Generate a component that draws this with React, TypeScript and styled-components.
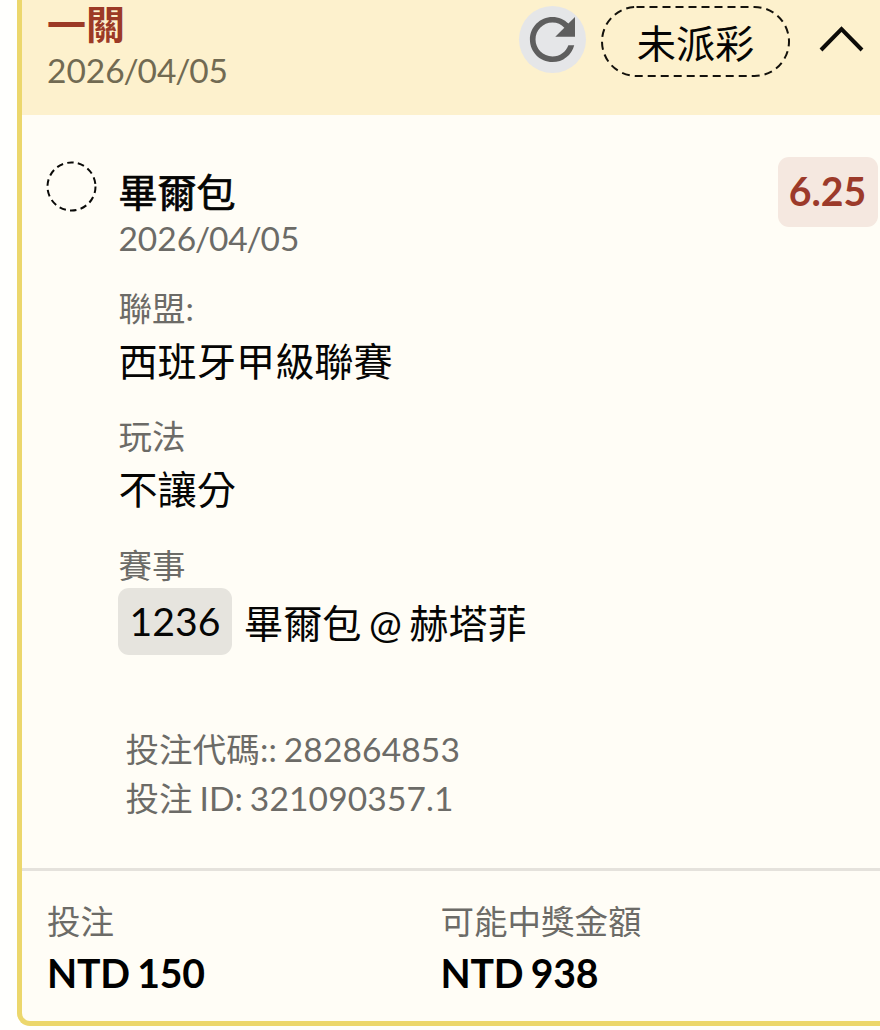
import React from "react";
import styled, { createGlobalStyle } from "styled-components";

const GlobalStyle = createGlobalStyle`
  * { box-sizing: border-box; }
  body {
    margin: 0;
    background: #fffffd;
    color: #050504;
    font-family: Lato, "Noto Sans CJK TC", sans-serif;
    font-size: 39.2px;
    word-spacing: -2px;
    overflow: hidden;
  }
`;

const Page = styled.main`
  height: 1030px;
  padding-left: 17px;
  overflow: hidden;
`;

const Card = styled.article`
  height: 1026px;
  display: flex;
  flex-direction: column;
  background: #fffdf6;
  border: solid #ecd76c;
  border-width: 0 0 5px 5px;
  border-bottom-left-radius: 13px;
  overflow: hidden;
`;

const Header = styled.header`
  height: 115px;
  flex: none;
  display: flex;
  justify-content: space-between;
  padding: 0 16px 0 25px;
  background: #fdf1cd;
`;

const Title = styled.h1`
  margin: 0;
  height: 50px;
  font-size: 39px;
  line-height: 49px;
  font-weight: 700;
  color: #9c3a26;
`;

const Muted = styled.div<{ $tone?: string }>`
  font-size: 33.5px;
  line-height: 40px;
  white-space: nowrap;
  color: ${({ $tone }) => $tone ?? "#6c6b67"};
`;

const Slash = styled.span`
  margin: 0 -1.2px;
`;

const Actions = styled.div`
  display: flex;
  align-items: flex-start;
  padding-top: 6px;
`;

const RefreshButton = styled.button`
  width: 67px;
  height: 67px;
  margin-right: 15px;
  padding: 0;
  border: 0;
  border-radius: 50%;
  background: #e5e6e8;
  svg { display: block; }
`;

const Status = styled.span`
  position: relative;
  width: 189px;
  height: 71px;
  margin-right: 29px;
  text-align: center;
  line-height: 73px;
  svg { position: absolute; inset: 0; }
`;

const CollapseButton = styled.button`
  width: 45px;
  height: 28px;
  margin-top: 19px;
  padding: 0;
  border: 0;
  background: none;
  svg { display: block; }
`;

const Body = styled.section`
  height: 753px;
  flex: none;
  display: flex;
  align-items: flex-start;
  padding: 42px 2px 0 24px;
`;

const Marker = styled.svg`
  flex: none;
  margin: 4px 21.4px 0 0;
`;

const Details = styled.div`
  flex: 1;
  padding-top: 9px;
`;

const Team = styled.h2`
  margin: 0;
  font-size: 39.1px;
  line-height: 52px;
  font-weight: 400;
  -webkit-text-stroke: 0.7px currentColor;
`;

const Field = styled.div`
  margin-top: 30px;
  & + & { margin-top: 19.4px; }
`;

const Value = styled.div`
  line-height: 48px;
  margin-top: 9px;
  height: 60px;
`;

const MatchRow = styled.div`
  display: flex;
  align-items: center;
  height: 67px;
  margin: 3.2px 0 0 -0.4px;
  gap: 12px;
  white-space: nowrap;
`;

const MatchCode = styled.span`
  width: 114px;
  height: 67px;
  border-radius: 11px;
  background: #e6e4de;
  line-height: 66px;
  text-align: center;
`;

const Teams = styled.span`
  line-height: 71px;
  padding-top: 2px;
  word-spacing: -2.6px;
`;

const Codes = styled.div`
  margin: 70px 0 0 7px;
`;

const CodeLine = styled(Muted)`
  line-height: 49px;
  letter-spacing: 0.15px;
`;

const Odds = styled.div`
  width: 100px;
  height: 70px;
  padding-right: 1px;
  border-radius: 11px;
  background: #f5e8e0;
  color: #9c3a2a;
  font-weight: 700;
  line-height: 67px;
  text-align: center;
`;

const Footer = styled.footer`
  flex: 1;
  display: grid;
  grid-template-columns: 393.5px 1fr;
  padding: 30px 0 0 25px;
  border-top: 3px solid #e5e2dc;
`;

const Amount = styled.div`
  margin-top: 8px;
  line-height: 48px;
  font-weight: 700;
  letter-spacing: -0.2px;
  color: #000;
`;

const fields = [
  { label: "聯盟:", value: "西班牙甲級聯賽" },
  { label: "玩法", value: "不讓分" },
];

const totals = [
  { label: "投注", amount: "NTD 150" },
  { label: "可能中獎金額", amount: "NTD 938" },
];

function EventDate({ value, tone }: { value: string; tone?: string }) {
  return (
    <Muted $tone={tone}>
      {value.split("/").map((part, i) => (
        <React.Fragment key={i}>
          {i > 0 && <Slash>/</Slash>}
          {part}
        </React.Fragment>
      ))}
    </Muted>
  );
}

export default function App() {
  return (
    <Page lang="zh-Hant">
      <GlobalStyle />
      <Card>
        <Header>
          <div>
            <Title>一關</Title>
            <EventDate value="2026/04/05" tone="#716a52" />
          </div>
          <Actions>
            <RefreshButton aria-label="重新整理">
              <svg width="67" height="67" viewBox="0 0 67 67">
                <path
                  transform="translate(-0.4 -0.3) scale(2.82)"
                  fill="#5e5e5e"
                  d="M17.65 6.35C16.2 4.9 14.21 4 12 4c-4.42 0-7.99 3.58-7.99 8s3.57 8 7.99 8c3.73 0 6.84-2.55 7.73-6h-2.08c-.82 2.33-3.04 4-5.65 4-3.31 0-6-2.69-6-6s2.69-6 6-6c1.66 0 3.14.69 4.22 1.78L13 11h7V4l-2.35 2.35z"
                />
              </svg>
            </RefreshButton>
            <Status>
              <svg width="189" height="71" viewBox="0 0 189 71" fill="none" stroke="#14120c" strokeWidth="2" strokeDasharray="8 5">
                <rect x="1" y="1" width="187" height="69" rx="34.5" />
              </svg>
              未派彩
            </Status>
            <CollapseButton aria-label="收合">
              <svg width="45" height="28" viewBox="0 0 45 28" fill="none" stroke="#0c0b08" strokeWidth="4">
                <path d="M2 25 22.5 4 43 25" />
              </svg>
            </CollapseButton>
          </Actions>
        </Header>
        <Body>
          <Marker width="51" height="51" viewBox="0 0 51 51" fill="none" stroke="#0a0a08" strokeWidth="2" strokeDasharray="6.6 4.2">
            <circle cx="25.5" cy="25.5" r="24" />
          </Marker>
          <Details>
            <Team>畢爾包</Team>
            <EventDate value="2026/04/05" />
            {fields.map((f) => (
              <Field key={f.label}>
                <Muted>{f.label}</Muted>
                <Value>{f.value}</Value>
              </Field>
            ))}
            <Field>
              <Muted>賽事</Muted>
              <MatchRow>
                <MatchCode>1236</MatchCode>
                <Teams>畢爾包 @ 赫塔菲</Teams>
              </MatchRow>
            </Field>
            <Codes>
              <CodeLine>投注代碼:: 282864853</CodeLine>
              <CodeLine>投注 ID: 321090357.1</CodeLine>
            </Codes>
          </Details>
          <Odds>6.25</Odds>
        </Body>
        <Footer>
          {totals.map((t) => (
            <div key={t.label}>
              <Muted>{t.label}</Muted>
              <Amount>{t.amount}</Amount>
            </div>
          ))}
        </Footer>
      </Card>
    </Page>
  );
}
